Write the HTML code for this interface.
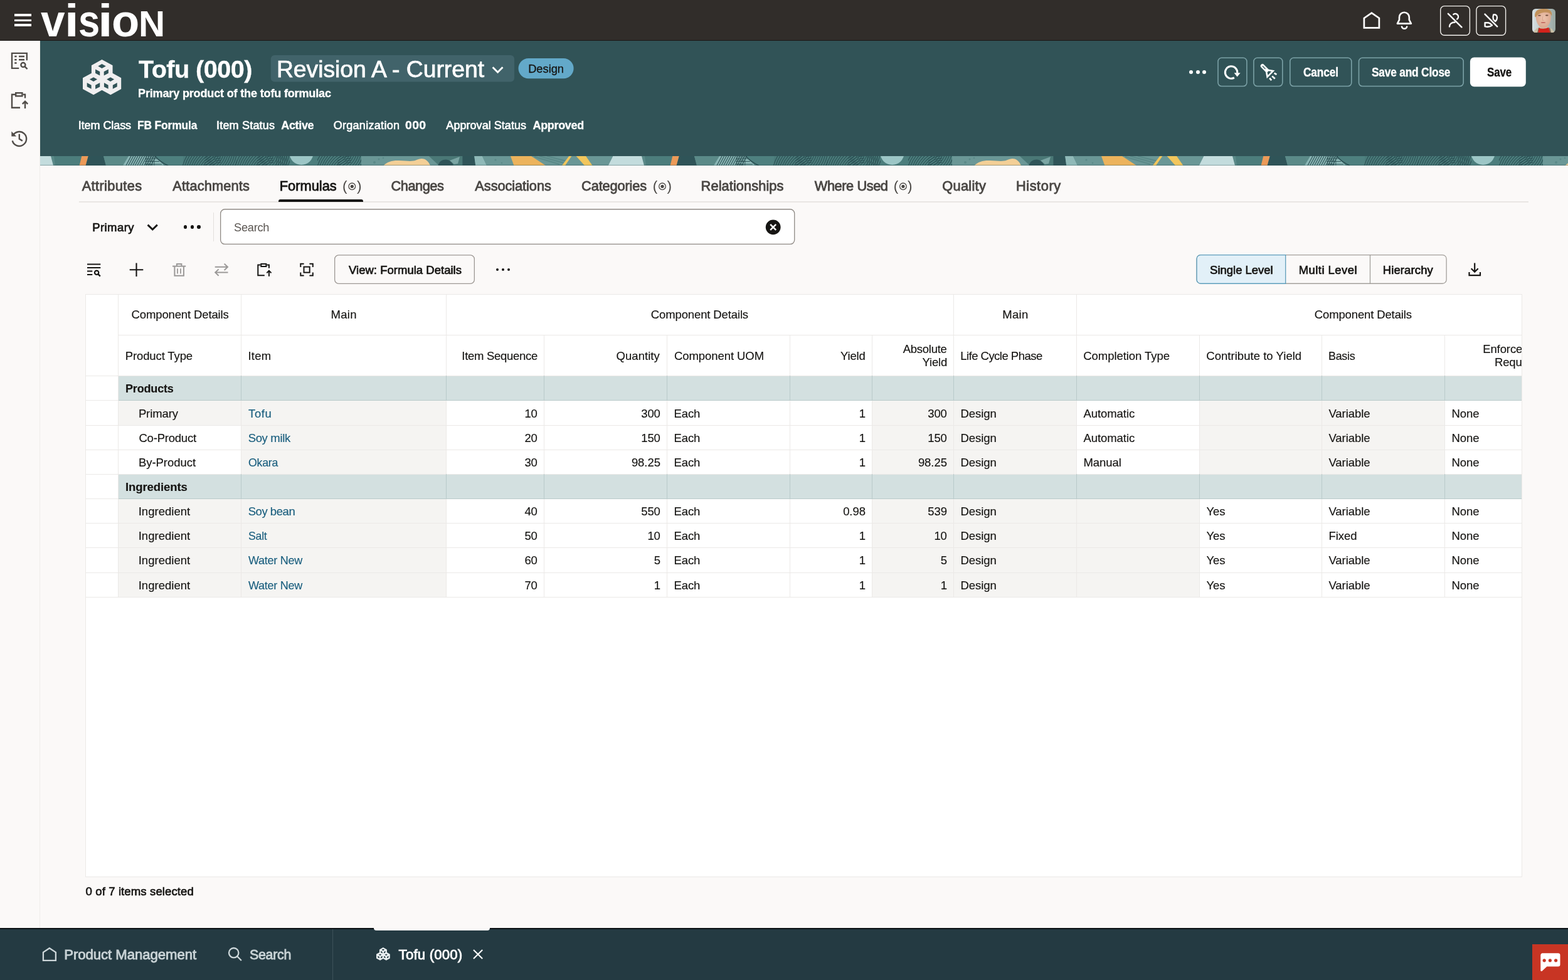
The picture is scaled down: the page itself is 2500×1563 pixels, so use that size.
<!DOCTYPE html>
<html lang="en">
<head>
<meta charset="utf-8">
<title>Tofu (000) - Formulas - Product Management</title>
<meta name="viewport" content="width=2500">
<style>

html,body{margin:0;padding:0}
body{position:relative;width:2500px;height:1563px;overflow:hidden;background:#fbf9f8;color:#161513;font-family:"Liberation Sans", "DejaVu Sans", sans-serif;font-size:18.5px;-webkit-font-smoothing:antialiased}
body>*{position:absolute;display:block;box-sizing:border-box;margin:0;padding:0;will-change:transform}
body>*>*,#logo>*{position:absolute;display:block;box-sizing:border-box;white-space:pre;margin:0;padding:0;transform-origin:0 0}
svg{overflow:visible}
a{text-decoration:none;color:#1b5f7f}
button{font:inherit;color:inherit;background:none;border:0;cursor:pointer}
h1,h2,p{font-weight:400}
.w{color:#fff}
#hero>span,#hero>h1,#hero>p{-webkit-text-stroke:0.3px currentColor}
#grid>span,#grid>a{-webkit-text-stroke:0.16px currentColor}

.b{font-weight:700}
.ln{background:#ebe9e7}
.gl{background:#b9caca}
.g{background:#f5f4f2}
.grp{background:#d3e0e0}
.hb{border:1.8px solid #789fa4;border-radius:6.5px}
.ob{border:1.4px solid #a9a5a1;border-radius:7px}

.cnt{font-size:22.5px;line-height:27px;color:#4a4744}
svg *{vector-effect:none}
.s{fill:none;stroke-linecap:butt;stroke-linejoin:miter}
.r{fill:none;stroke-linecap:round;stroke-linejoin:round}

</style>

</head>
<body>
<header id="topbar" style="left:0;top:0;width:2500px;height:64px;background:#312d2a">
<div style="left:23px;top:22.3px;width:27.3px;height:3.9px;background:#fff"></div>
<div style="left:23px;top:30.6px;width:27.3px;height:3.9px;background:#fff"></div>
<div style="left:23px;top:38.4px;width:27.3px;height:3.9px;background:#fff"></div>
<div id="logo" style="left:0;top:0;width:270px;height:64px" role="img" aria-label="vision"><span style="left:65.33px;top:-8px;font-size:73px;line-height:81px;font-weight:700;transform:scaleX(0.9499);color:#fff;">v</span><span style="left:103.41px;top:-8px;font-size:73px;line-height:81px;font-weight:700;transform:scaleX(1.1165);color:#fff;">i</span><span style="left:124.64px;top:-8px;font-size:73px;line-height:81px;font-weight:700;transform:scaleX(0.8417);color:#fff;">s</span><span style="left:156.35px;top:-8px;font-size:73px;line-height:81px;font-weight:700;transform:scaleX(1.1664);color:#fff;">i</span><span style="left:177.77px;top:-8px;font-size:73px;line-height:81px;font-weight:700;transform:scaleX(0.9925);color:#fff;">o</span><span style="left:221.3px;top:7px;font-size:56.5px;line-height:63px;font-weight:700;transform:scaleX(1.0323);color:#fff;">N</span></div>
<svg style="left:0;top:0" width="2500" height="64" viewBox="0 0 2500 64" aria-hidden="true"><path class="s" stroke="#fff" stroke-width="2.7" d="M2186.9 20.7 L2198.9 29 V44.3 H2174.9 V29 Z"/><path class="r" stroke="#fff" stroke-width="2.6" d="M2227.9 37.6 L2231 31.6 V27.6 a7.9 7.9 0 0 1 15.8 0 V31.6 L2249.9 37.6 Z"/><path class="s" stroke="#fff" stroke-width="2.5" d="M2234.9 41.6 a4.2 4.2 0 0 0 8.4 0"/><rect x="2296.7" y="9.6" width="46.7" height="46.7" rx="6.2" fill="none" stroke="#f1efec" stroke-width="1.4"/><rect x="2353.8999999999996" y="9.6" width="46.7" height="46.7" rx="6.2" fill="none" stroke="#f1efec" stroke-width="1.4"/><g class="r" stroke="#fff" stroke-width="2.4"><path d="M2308.9 21.8 L2330.5 43.3"/><path d="M2317.4 22.9 A4.5 4.5 0 1 1 2323.2 30.4"/><path d="M2311 42.4 C2311 38.2 2314.6 35.4 2319.6 35.5"/></g><g class="r" stroke="#fff" stroke-width="2.4"><path d="M2367.5 22.6 L2387.2 42.3"/><path d="M2381.2 23.4 C2384.6 22.6 2387.2 24.8 2387 28.2 C2386.9 30.6 2385.6 32.8 2384.2 34.2 L2381 31 C2380.2 28.8 2380.4 25.6 2381.2 23.4 Z"/><path d="M2367.6 36.2 H2372.6 C2374.6 36.6 2376.2 37.6 2377.4 38.8 L2379 40.4 C2376 42.6 2371.6 43.2 2367.6 42.2 Z"/></g></svg>
<svg style="left:2442.6px;top:13.9px;border-radius:5.5px;overflow:hidden" width="37.2" height="38" viewBox="0 0 37 38" preserveAspectRatio="none" role="img" aria-label="User"><defs><linearGradient id="avbg" x1="0" x2="1" y1="0" y2="0"><stop offset="0" stop-color="#d9e1e3"/><stop offset="0.45" stop-color="#b9c5c7"/><stop offset="1" stop-color="#99a7a1"/></linearGradient><radialGradient id="avf" cx="0.5" cy="0.45" r="0.6"><stop offset="0" stop-color="#edc4ad"/><stop offset="1" stop-color="#d9a58c"/></radialGradient></defs><rect width="37" height="38" fill="url(#avbg)"/><path fill="#c9bfa6" d="M1 38 L6.5 31.5 L12 29 L25 29 L30.5 31.5 L36 38 Z"/><path fill="#7a6a58" d="M8 38 L10 30.5 L11.5 30.5 L10.5 38 Z M28 38 L26.5 30.5 L28 30.5 L30 38 Z"/><path fill="#d3221b" d="M9.6 38 L10.4 30.4 Q17.6 33.6 26 29.8 L28.4 38 Z"/><path fill="url(#avf)" d="M5.6 13 C5 4 11 2 17.6 2 C24.6 2 30 4.5 29.6 13 C29.4 19 28 24 24.4 27.4 C22 29.8 20 30.6 17.6 30.6 C15.2 30.6 13 29.6 10.8 27.2 C7.4 23.6 6 18.6 5.6 13 Z"/><path fill="#c2915a" d="M4.2 12.6 C3 3.4 9.6 0 17.8 0 C26.6 0 32.4 3 31 11.8 C29.6 8.2 27 6.2 23 5.8 C16.6 5.2 9.6 7 5.4 13.4 Z"/><ellipse cx="11.4" cy="10.7" rx="2.3" ry="0.9" fill="#6e4b3c"/><ellipse cx="23.2" cy="10.5" rx="2.3" ry="0.9" fill="#6e4b3c"/><path d="M16.8 12 L16 18.4 H18.6" fill="none" stroke="#d39a84" stroke-width="0.8"/><ellipse cx="17.4" cy="22" rx="3.7" ry="1.05" fill="#c56f64"/></svg>
</header>
<nav id="rail" aria-label="Item tools" style="left:0;top:64px;width:64px;height:1416px;background:#fbf9f8;border-right:1px solid #efedea">
<svg style="left:0;top:0" width="64" height="200" viewBox="0 64 64 200" aria-hidden="true"><g class="s" stroke="#514d49" stroke-width="2.4"><path d="M30.2 108.9 H19 V84.9 H42.8 V96.2"/><path d="M23.2 90 H26.6 M30 90 H39 M23.2 95.3 H26.6 M30 95.3 H39 M23.2 100.5 H26.6"/><circle cx="36.9" cy="103.5" r="3.5"/><path d="M39.5 106.1 L43.6 110.2"/></g><g class="s" stroke="#514d49" stroke-width="2.4"><path d="M32 171.8 H19 V150.7 H24"/><path d="M36.6 150.7 H40 V156.4"/><rect x="25.2" y="148.2" width="10.2" height="5"/><path d="M40 172.9 V162.4 M35.8 165.9 L40 161.6 L44.2 165.9"/></g><g class="s" stroke="#514d49" stroke-width="2.4"><path d="M20.6 216.2 A11.4 11.4 0 1 1 19.7 224.4"/><path d="M30.8 213.8 V221.6 L35.8 224.6"/></g><path fill="#514d49" d="M18.3 209.6 L18.3 217.6 L26.2 217.6 Z"/></svg>
</nav>
<section id="hero" style="left:64px;top:64px;width:2436px;height:185px;background:#315357;color:#fff">
<svg style="left:0;top:0" width="2436" height="185" viewBox="64 64 2436 185" aria-hidden="true"><rect x="431.8" y="88" width="388.2" height="42.6" rx="6" fill="#41636a"/><rect x="826.5" y="93" width="88.1" height="32.2" rx="16.1" fill="#63a9c9"/><rect x="1942" y="92.3" width="45.9" height="45.2" rx="5.7" fill="none" stroke="#7ba1a6" stroke-width="1.6"/><rect x="1998.9" y="92.3" width="45.9" height="45.2" rx="5.7" fill="none" stroke="#7ba1a6" stroke-width="1.6"/><rect x="2056.8" y="92.3" width="98" height="45.2" rx="5.7" fill="none" stroke="#7ba1a6" stroke-width="1.6"/><rect x="2166.5" y="92.3" width="166.7" height="45.2" rx="5.7" fill="none" stroke="#7ba1a6" stroke-width="1.6"/><rect x="2343.9" y="91.4" width="88.9" height="46.8" rx="6.5" fill="#fff"/></svg>
<h1 style="left:156.96px;top:24px;font-size:39.6px;line-height:44px;letter-spacing:-0.52px;font-weight:700;">Tofu (000)</h1>
<span style="left:376.94px;top:25px;font-size:37.3px;line-height:42px;letter-spacing:-0.03px;-webkit-text-stroke:0.75px currentColor;">Revision A - Current</span>
<span style="left:778.2px;top:35px;font-size:18.3px;line-height:21px;letter-spacing:-0.02px;color:#161513;">Design</span>
<p style="left:155.79px;top:74px;font-size:18.6px;line-height:21px;letter-spacing:-0.19px;font-weight:700;transform:scaleX(0.9725);">Primary product of the tofu formulac</p>
<span style="left:60.74px;top:126px;font-size:18px;line-height:20px;letter-spacing:-0.07px;-webkit-text-stroke:0.6px currentColor;">Item Class</span>
<span style="left:154.53px;top:126px;font-size:18px;line-height:20px;letter-spacing:-0.18px;font-weight:700;-webkit-text-stroke:0.3px currentColor;transform:scaleX(0.9691);">FB Formula</span>
<span style="left:281.04px;top:126px;font-size:18px;line-height:20px;letter-spacing:0.19px;-webkit-text-stroke:0.6px currentColor;">Item Status</span>
<span style="left:384.25px;top:126px;font-size:18px;line-height:20px;letter-spacing:-0.33px;font-weight:700;-webkit-text-stroke:0.3px currentColor;">Active</span>
<span style="left:467.65px;top:126px;font-size:18px;line-height:20px;letter-spacing:0.3px;-webkit-text-stroke:0.6px currentColor;">Organization</span>
<span style="left:582.43px;top:126px;font-size:18px;line-height:20px;letter-spacing:0.36px;font-weight:700;-webkit-text-stroke:0.3px currentColor;transform:scaleX(1.0779);">000</span>
<span style="left:647.36px;top:126px;font-size:18px;line-height:20px;letter-spacing:0.04px;-webkit-text-stroke:0.6px currentColor;">Approval Status</span>
<span style="left:785.55px;top:126px;font-size:18px;line-height:20px;letter-spacing:-0.34px;font-weight:700;-webkit-text-stroke:0.3px currentColor;">Approved</span>
<div style="left:1832.4px;top:47.8px;width:6px;height:6px;background:#fff;border-radius:50%"></div>
<div style="left:1842.6px;top:47.8px;width:6px;height:6px;background:#fff;border-radius:50%"></div>
<div style="left:1852.9px;top:47.8px;width:6px;height:6px;background:#fff;border-radius:50%"></div>
<button style="left:1877.2px;top:27.5px;width:47.5px;height:46.8px;" aria-label="Refresh"></button>
<button style="left:1934.1px;top:27.5px;width:47.5px;height:46.8px;" aria-label="Highlight"></button>
<button style="left:1992px;top:27.5px;width:99.6px;height:46.8px;"></button>
<button style="left:2101.7px;top:27.5px;width:168.3px;height:46.8px;"></button>
<button style="left:2279.9px;top:27.4px;width:88.9px;height:46.8px;"></button>
<span style="left:2013.99px;top:40px;font-size:19.5px;line-height:22px;letter-spacing:-0.2px;font-weight:700;transform:scaleX(0.8898);">Cancel</span>
<span style="left:2123.2px;top:40px;font-size:19.5px;line-height:22px;letter-spacing:-0.2px;font-weight:700;transform:scaleX(0.8861);">Save and Close</span>
<span style="left:2307.41px;top:40px;font-size:19.5px;line-height:22px;letter-spacing:-0.2px;font-weight:700;transform:scaleX(0.8712);color:#161513;">Save</span>
<svg style="left:68.2px;top:30.9px" width="61.2" height="56.3" viewBox="245 200 1235 1135" preserveAspectRatio="none" aria-hidden="true"><path fill="#f0eff0" fill-rule="evenodd" d="M860 200 L1205 385 L1205 640 L1480 790 L1480 1150 L1140 1335 L860 1185 L590 1335 L245 1150 L245 790 L525 640 L525 385 Z M860 340 L990 410 L860 480 L735 410 Z M650 515 L795 590 L795 715 L650 640 Z M1070 515 L925 590 L925 715 L1070 640 Z M590 770 L710 835 L590 905 L465 835 Z M380 945 L520 1020 L520 1145 L380 1070 Z M795 945 L650 1020 L650 1150 L795 1075 Z M1135 770 L1255 835 L1135 905 L1015 835 Z M930 945 L1065 1020 L1065 1145 L930 1075 Z M1350 945 L1210 1020 L1210 1145 L1350 1070 Z"/></svg>
<svg style="left:0;top:0" width="2436" height="185" viewBox="64 64 2436 185" aria-hidden="true"><path class="s" stroke="#fff" stroke-width="2.9" d="M785.6 107.3 L793.55 115.2 L801.5 107.3"/><path class="s" stroke="#fff" stroke-width="3" d="M1967.9 123.9 A9.7 9.7 0 1 1 1972.7 116.5"/><path fill="#fff" d="M1967.6 116.2 H1977.6 L1972.6 122.6 Z"/><path class="r" stroke="#fff" stroke-width="6.3" d="M2012.9 105.2 L2019.6 111.9"/><path class="r" stroke="#315357" stroke-width="1.3" d="M2013.3 105.8 L2017.6 110.1"/><path class="s" stroke="#fff" stroke-width="2.6" stroke-linejoin="round" d="M2018.6 111.3 L2029.8 113.2 L2020.6 122.6 Z"/><path class="s" stroke="#fff" stroke-width="2.7" d="M2031.6 116.6 L2035.4 118.9 M2028.2 121.6 L2032.8 125.6 M2024.2 124.6 L2027.2 128.2"/></svg>
</section>
<div id="strip" style="left:64px;top:249px;width:2436px;height:15px;background:#5b8b8a;overflow:hidden">
<svg style="left:0;top:0" width="2436" height="15" viewBox="0 0 2436 15" aria-hidden="true"><defs><g id="tile"><polygon fill="#5a8988" points="0,0 946,0 946,15 0,15"/><polygon fill="#4c7d7c" points="22,0 66,0 63,15 24,15"/><polygon fill="#2f5458" points="76.6,0 101,0 105,15 72.5,15"/><polygon fill="#5b8a88" points="101,0 141,0 132,15 105,15"/><polygon fill="#8ab6b5" points="141,0 183,0 198,15 132,15"/><polygon fill="#4e807f" points="183,0 228,0 228,15 198,15"/><polygon fill="#4a7b7a" points="228,0 398,0 398,15 228,15"/><polygon fill="#4c7e7d" points="398,0 512,0 512,15 398,15"/><polygon fill="#6a9796" points="512,0 620,0 636,15 512,15"/><polygon fill="#4a7876" points="620,0 673.3,0 673.3,15 636,15"/><polygon fill="#2f5458" points="673.3,0 692.2,0 694.2,15 673.3,15"/><polygon fill="#8fb9b8" points="692.2,0 705,0 712,15 694.2,15"/><polygon fill="#6a9796" points="705,0 913,0 906,15 712,15"/><polygon fill="#ec9a58" points="66.3,0 76.6,0 72.5,15 62.6,15"/><path d="M145 0 L137 15 M148.6 0 L140.6 15 M152.2 0 L144.2 15 M155.8 0 L147.8 15 M159.4 0 L151.4 15 M163 0 L155 15 M166.6 0 L158.6 15 M170.2 0 L162.2 15 M173.8 0 L165.8 15 M177.4 0 L169.4 15 M181 0 L173 15 M184.6 0 L176.6 15 " stroke="#2b5054" stroke-width="1.1" fill="none"/><path d="M169 0 V15 M172.2 0 V15 M175.4 0 V15 M178.6 0 V15 M181.8 0 V15 M167 4 H186 M167 8.5 H190 M167 13 H194" stroke="#2b5054" stroke-width="0.9" fill="none"/><path d="M183 0 Q192 10 204 15" stroke="#2b5054" stroke-width="1.6" fill="none"/><clipPath id="k1"><rect x="226" y="0" width="62" height="15"/></clipPath><g clip-path="url(#k1)" fill="none" stroke="#2b5054" stroke-width="1.05"><circle cx="288" cy="32" r="22"/><circle cx="288" cy="32" r="25.4"/><circle cx="288" cy="32" r="28.8"/><circle cx="288" cy="32" r="32.2"/><circle cx="288" cy="32" r="35.6"/><circle cx="288" cy="32" r="39"/><circle cx="288" cy="32" r="42.4"/><circle cx="288" cy="32" r="45.8"/><circle cx="288" cy="32" r="49.2"/><circle cx="288" cy="32" r="52.6"/><circle cx="288" cy="32" r="56"/><circle cx="288" cy="32" r="59.4"/><circle cx="288" cy="32" r="62.8"/></g><clipPath id="k2"><rect x="262" y="0" width="52" height="15"/></clipPath><g clip-path="url(#k2)" fill="none" stroke="#2b5054" stroke-width="1.05"><circle cx="254" cy="-14" r="16"/><circle cx="254" cy="-14" r="19.4"/><circle cx="254" cy="-14" r="22.8"/><circle cx="254" cy="-14" r="26.2"/><circle cx="254" cy="-14" r="29.6"/><circle cx="254" cy="-14" r="33"/><circle cx="254" cy="-14" r="36.4"/><circle cx="254" cy="-14" r="39.8"/><circle cx="254" cy="-14" r="43.2"/><circle cx="254" cy="-14" r="46.6"/><circle cx="254" cy="-14" r="50"/><circle cx="254" cy="-14" r="53.4"/><circle cx="254" cy="-14" r="56.8"/><circle cx="254" cy="-14" r="60.2"/><circle cx="254" cy="-14" r="63.6"/></g><clipPath id="k3"><rect x="308" y="0" width="64" height="15"/></clipPath><g clip-path="url(#k3)" fill="none" stroke="#2b5054" stroke-width="1.05"><circle cx="372" cy="32" r="22"/><circle cx="372" cy="32" r="25.4"/><circle cx="372" cy="32" r="28.8"/><circle cx="372" cy="32" r="32.2"/><circle cx="372" cy="32" r="35.6"/><circle cx="372" cy="32" r="39"/><circle cx="372" cy="32" r="42.4"/><circle cx="372" cy="32" r="45.8"/><circle cx="372" cy="32" r="49.2"/><circle cx="372" cy="32" r="52.6"/><circle cx="372" cy="32" r="56"/><circle cx="372" cy="32" r="59.4"/><circle cx="372" cy="32" r="62.8"/></g><clipPath id="k4"><rect x="346" y="0" width="52" height="15"/></clipPath><g clip-path="url(#k4)" fill="none" stroke="#2b5054" stroke-width="1.05"><circle cx="338" cy="-14" r="16"/><circle cx="338" cy="-14" r="19.4"/><circle cx="338" cy="-14" r="22.8"/><circle cx="338" cy="-14" r="26.2"/><circle cx="338" cy="-14" r="29.6"/><circle cx="338" cy="-14" r="33"/><circle cx="338" cy="-14" r="36.4"/><circle cx="338" cy="-14" r="39.8"/><circle cx="338" cy="-14" r="43.2"/><circle cx="338" cy="-14" r="46.6"/><circle cx="338" cy="-14" r="50"/><circle cx="338" cy="-14" r="53.4"/><circle cx="338" cy="-14" r="56.8"/><circle cx="338" cy="-14" r="60.2"/><circle cx="338" cy="-14" r="63.6"/></g><clipPath id="k5"><rect x="442" y="0" width="54" height="15"/></clipPath><g clip-path="url(#k5)" fill="none" stroke="#2b5054" stroke-width="1.05"><circle cx="496" cy="32" r="22"/><circle cx="496" cy="32" r="25.4"/><circle cx="496" cy="32" r="28.8"/><circle cx="496" cy="32" r="32.2"/><circle cx="496" cy="32" r="35.6"/><circle cx="496" cy="32" r="39"/><circle cx="496" cy="32" r="42.4"/><circle cx="496" cy="32" r="45.8"/><circle cx="496" cy="32" r="49.2"/><circle cx="496" cy="32" r="52.6"/><circle cx="496" cy="32" r="56"/><circle cx="496" cy="32" r="59.4"/></g><clipPath id="k6"><rect x="474" y="0" width="38" height="15"/></clipPath><g clip-path="url(#k6)" fill="none" stroke="#2b5054" stroke-width="1.05"><circle cx="466" cy="-14" r="16"/><circle cx="466" cy="-14" r="19.4"/><circle cx="466" cy="-14" r="22.8"/><circle cx="466" cy="-14" r="26.2"/><circle cx="466" cy="-14" r="29.6"/><circle cx="466" cy="-14" r="33"/><circle cx="466" cy="-14" r="36.4"/><circle cx="466" cy="-14" r="39.8"/><circle cx="466" cy="-14" r="43.2"/><circle cx="466" cy="-14" r="46.6"/><circle cx="466" cy="-14" r="50"/><circle cx="466" cy="-14" r="53.4"/><circle cx="466" cy="-14" r="56.8"/></g><path d="M377 0 V15 M380.2 0 V15 M383.4 0 V15 M386.6 0 V15 M389.8 0 V15 M393 0 V15 " stroke="#2b5054" stroke-width="0.9" fill="none"/><circle cx="416.5" cy="-5" r="19" fill="#9cc6c6"/><g fill="#5a8988"><circle cx="533" cy="10" r="2"/><circle cx="540" cy="5" r="1.4"/><circle cx="547" cy="3" r="1.2"/><circle cx="726" cy="6" r="1.6"/><circle cx="736" cy="11" r="1.3"/></g><path fill="#f3cf96" d="M547.7 15 C553 9 562 6.6 572 7 C584 7.6 593 9 599 6.6 C604 4.4 608 3.2 612 4.6 C617 6.4 620 10.5 622 15 Z"/><path fill="#2f5458" d="M634.5 15 C636 8 642 5.2 647 5.4 C652 5.6 657 9 659 15 Z"/><path fill="#7aa5a3" d="M653 7 L669 1 L666 12 L660 13 Z"/><polygon fill="#ecb35c" points="750,0 783,0 806,15 755.4,15"/><path d="M788 1 L828 13 M796 0 L835 11 M808 0 L839 8" stroke="#5a8988" stroke-width="2" fill="none"/><polygon fill="#f2c65c" points="843.2,0 847.4,0 837,15 831.9,15"/><polygon fill="#f2c65c" points="854.6,0 870.1,0 880.5,15 868,15"/><polygon fill="#c3dcdd" points="913.5,0 959,0 963,15 906,15"/><polygon fill="#c3dcdd" points="-28.5,0 17,0 21,15 -36,15"/></g></defs><use href="#tile"/><use href="#tile" x="942"/><use href="#tile" x="1884"/><rect x="0" y="14.3" width="2436" height="0.7" fill="#24474b" opacity="0.55"/></svg>
</div>
<main id="main" style="left:64px;top:264px;width:2436px;height:1216px">
<svg style="left:0;top:0" width="2436" height="300" viewBox="64 264 2436 300" aria-hidden="true"><rect x="351.65" y="333.75" width="915.1" height="55.7" rx="6.85" fill="#fff" stroke="#8f8a85" stroke-width="1.3"/><rect x="533.65" y="406.85" width="222.7" height="45.5" rx="6.35" fill="none" stroke="#9d9894" stroke-width="1.3"/><rect x="1908.05" y="406.55" width="398.1" height="45.7" rx="6.35" fill="none" stroke="#a39f9b" stroke-width="1.3"/><path d="M2049.7 406.55 H1914.4 a6.35 6.35 0 0 0 -6.35 6.35 V445.9 a6.35 6.35 0 0 0 6.35 6.35 H2049.7 Z" fill="#e2f0f8" stroke="#5d9dbb" stroke-width="1.3"/><path d="M2184.5 406.6 V452.3" stroke="#a39f9b" stroke-width="1.3" fill="none"/></svg>
<div style="left:62px;top:57.2px;width:2311px;height:1.5px;background:#e9e6e3"></div>
<span style="left:66.66px;top:20px;font-size:21.8px;line-height:25px;letter-spacing:0.37px;-webkit-text-stroke:0.83px currentColor;color:#4a4744;">Attributes</span>
<span style="left:211.36px;top:20px;font-size:21.8px;line-height:25px;letter-spacing:0.13px;-webkit-text-stroke:0.83px currentColor;color:#4a4744;">Attachments</span>
<span style="left:381.71px;top:20px;font-size:21.8px;line-height:25px;letter-spacing:0.02px;-webkit-text-stroke:0.83px currentColor;color:#161513;">Formulas</span>
<span style="left:559.59px;top:20px;font-size:21.8px;line-height:25px;letter-spacing:-0.5px;-webkit-text-stroke:0.83px currentColor;color:#4a4744;">Changes</span>
<span style="left:693.36px;top:20px;font-size:21.8px;line-height:25px;letter-spacing:-0.08px;-webkit-text-stroke:0.83px currentColor;color:#4a4744;">Associations</span>
<span style="left:863.09px;top:20px;font-size:21.8px;line-height:25px;letter-spacing:-0.15px;-webkit-text-stroke:0.83px currentColor;color:#4a4744;">Categories</span>
<span style="left:1053.61px;top:20px;font-size:21.8px;line-height:25px;letter-spacing:0.08px;-webkit-text-stroke:0.83px currentColor;color:#4a4744;">Relationships</span>
<span style="left:1234.8px;top:20px;font-size:21.8px;line-height:25px;letter-spacing:-0.44px;-webkit-text-stroke:0.83px currentColor;color:#4a4744;">Where Used</span>
<span style="left:1438.27px;top:20px;font-size:21.8px;line-height:25px;letter-spacing:0.29px;-webkit-text-stroke:0.83px currentColor;color:#4a4744;">Quality</span>
<span style="left:1555.91px;top:20px;font-size:21.8px;line-height:25px;letter-spacing:0.57px;-webkit-text-stroke:0.83px currentColor;color:#4a4744;">History</span>
<div style="left:379.5px;top:54.4px;width:135px;height:3.8px;background:#161513;border-radius:3px 3px 0 0"></div>
<span style="left:83.18px;top:88px;font-size:18.5px;line-height:21px;letter-spacing:0.44px;-webkit-text-stroke:0.7px currentColor;">Primary</span>
<div style="left:275.8px;top:74.5px;width:1.2px;height:46.5px;background:#e3e0dc"></div>
<span style="left:309.07px;top:88px;font-size:18.8px;line-height:21px;letter-spacing:-0.28px;transform:scaleX(0.9727);color:#5b5652;">Search</span>
<div style="left:228.6px;top:95.3px;width:5.4px;height:5.4px;background:#161513;border-radius:50%"></div>
<div style="left:239.5px;top:95.3px;width:5.4px;height:5.4px;background:#161513;border-radius:50%"></div>
<div style="left:250.3px;top:95.3px;width:5.4px;height:5.4px;background:#161513;border-radius:50%"></div>
<button style="left:469px;top:142.2px;width:224px;height:46.8px;"></button>
<span style="left:492.02px;top:156px;font-size:18.5px;line-height:21px;letter-spacing:0.02px;-webkit-text-stroke:0.7px currentColor;">View: Formula Details</span>
<div style="left:727px;top:164.1px;width:4.4px;height:4.4px;background:#161513;border-radius:50%"></div>
<div style="left:735.8px;top:164.1px;width:4.4px;height:4.4px;background:#161513;border-radius:50%"></div>
<div style="left:744.6px;top:164.1px;width:4.4px;height:4.4px;background:#161513;border-radius:50%"></div>
<span style="left:1865.06px;top:156px;font-size:18.5px;line-height:21px;letter-spacing:-0.01px;-webkit-text-stroke:0.7px currentColor;">Single Level</span>
<span style="left:2006.68px;top:156px;font-size:18.5px;line-height:21px;letter-spacing:0.44px;-webkit-text-stroke:0.7px currentColor;">Multi Level</span>
<span style="left:2140.68px;top:156px;font-size:18.5px;line-height:21px;letter-spacing:0.12px;-webkit-text-stroke:0.7px currentColor;">Hierarchy</span>
<span style="left:72.57px;top:1147px;font-size:18.6px;line-height:21px;letter-spacing:0.09px;-webkit-text-stroke:0.71px currentColor;">0 of 7 items selected</span>
<svg style="left:0;top:0" width="2436" height="300" viewBox="64 264 2436 300" aria-hidden="true"><path class="s" stroke="#161513" stroke-width="2.9" d="M235.6 358.6 L243.2 366 L250.8 358.6"/><circle cx="1232.7" cy="362.3" r="11.9" fill="#161513"/><path class="s" stroke="#fff" stroke-width="2.5" d="M1228.2 357.8 L1237.2 366.8 M1237.2 357.8 L1228.2 366.8"/><circle cx="561.3" cy="297.3" r="5.3" fill="none" stroke="#4a4744" stroke-width="1.3"/><circle cx="561.3" cy="297.3" r="2.6" fill="#4a4744"/><circle cx="1056" cy="297.3" r="5.3" fill="none" stroke="#4a4744" stroke-width="1.3"/><circle cx="1056" cy="297.3" r="2.6" fill="#4a4744"/><circle cx="1439.9" cy="297.3" r="5.3" fill="none" stroke="#4a4744" stroke-width="1.3"/><circle cx="1439.9" cy="297.3" r="2.6" fill="#4a4744"/><g class="s" stroke="#161513" stroke-width="2"><path d="M139 421.5 H160.3 M139 427 H160.3 M139 432.5 H147.3 M139 437.9 H147.3"/><circle cx="154.1" cy="434.8" r="3.2" stroke-width="2.2"/><path d="M156.4 437.2 L159.8 440.6" stroke-width="2.4"/></g><path class="s" stroke="#161513" stroke-width="2.1" d="M206.7 430.3 H228.3 M217.5 419.4 V441.1"/><g class="s" stroke="#9b9998" stroke-width="2"><path d="M275 424.6 H296.2"/><path d="M281.9 424.6 V420.9 H289.4 V424.6"/><path d="M278.4 424.6 V439.7 H292.9 V424.6"/><path d="M283 428.2 V436.4 M288 428.2 V436.4" stroke-width="1.8"/></g><g class="s" stroke="#9b9998" stroke-width="2"><path d="M342.7 425.8 H362.6 M357.6 420.6 L363 425.8 L357.6 431"/><path d="M363.5 434.6 H343.6 M348.6 429.4 L343.2 434.6 L348.6 439.8"/></g><g class="s" stroke="#161513" stroke-width="2"><path d="M421.8 439.2 H411.3 V422.4 H415.3"/><path d="M425.4 422.4 H428.9 V427.8"/><rect x="416.3" y="420.9" width="8.1" height="4.1"/><path d="M428.9 440.7 V432 M425.3 435.4 L428.9 431.6 L432.5 435.4"/></g><g class="s" stroke="#161513" stroke-width="2"><path d="M479.3 426 V420.8 H484.6 M493.4 420.8 H498.8 V426 M498.8 434.4 V439.6 H493.4 M484.6 439.6 H479.3 V434.4"/><rect x="484.5" y="425.6" width="9.2" height="9"/></g><g class="s" stroke="#161513" stroke-width="2.2"><path d="M2342.5 433.9 V439.1 H2360 V433.9"/><path d="M2351.2 419.5 V433.4 M2345.7 428.2 L2351.2 433.8 L2356.7 428.2"/></g></svg>
<span style="left:482.1px;top:20px;font-size:22.5px;line-height:25px;color:#4a4744;">(</span>
<span style="left:504.9px;top:20px;font-size:22.5px;line-height:25px;color:#4a4744;">)</span>
<span style="left:976.8px;top:20px;font-size:22.5px;line-height:25px;color:#4a4744;">(</span>
<span style="left:999.4px;top:20px;font-size:22.5px;line-height:25px;color:#4a4744;">)</span>
<span style="left:1360.7px;top:20px;font-size:22.5px;line-height:25px;color:#4a4744;">(</span>
<span style="left:1383.1px;top:20px;font-size:22.5px;line-height:25px;color:#4a4744;">)</span>
</main>
<div id="grid" role="grid" style="left:136px;top:469px;width:2291px;height:930px;background:#fff;border:1px solid #ebe9e7;overflow:hidden">
<div class="grp" style="left:52px;top:129px;width:2312px;height:40px;"></div>
<div class="g" style="left:52px;top:169px;width:195px;height:39px;"></div>
<div class="g" style="left:248px;top:169px;width:326px;height:39px;"></div>
<div class="g" style="left:1254px;top:169px;width:129px;height:39px;"></div>
<div class="g" style="left:1384px;top:169px;width:195px;height:39px;"></div>
<div class="g" style="left:1776px;top:169px;width:194px;height:39px;"></div>
<div class="g" style="left:1971px;top:169px;width:195px;height:39px;"></div>
<div class="g" style="left:248px;top:209px;width:326px;height:38px;"></div>
<div class="g" style="left:1254px;top:209px;width:129px;height:38px;"></div>
<div class="g" style="left:1384px;top:209px;width:195px;height:38px;"></div>
<div class="g" style="left:1776px;top:209px;width:194px;height:38px;"></div>
<div class="g" style="left:1971px;top:209px;width:195px;height:38px;"></div>
<div class="g" style="left:248px;top:248px;width:326px;height:38px;"></div>
<div class="g" style="left:1254px;top:248px;width:129px;height:38px;"></div>
<div class="g" style="left:1384px;top:248px;width:195px;height:38px;"></div>
<div class="g" style="left:1776px;top:248px;width:194px;height:38px;"></div>
<div class="g" style="left:1971px;top:248px;width:195px;height:38px;"></div>
<div class="grp" style="left:52px;top:286px;width:2312px;height:40px;"></div>
<div class="g" style="left:52px;top:326px;width:195px;height:38px;"></div>
<div class="g" style="left:248px;top:326px;width:326px;height:38px;"></div>
<div class="g" style="left:1254px;top:326px;width:129px;height:38px;"></div>
<div class="g" style="left:1384px;top:326px;width:195px;height:38px;"></div>
<div class="g" style="left:1580px;top:326px;width:195px;height:38px;"></div>
<div class="g" style="left:52px;top:365px;width:195px;height:38px;"></div>
<div class="g" style="left:248px;top:365px;width:326px;height:38px;"></div>
<div class="g" style="left:1254px;top:365px;width:129px;height:38px;"></div>
<div class="g" style="left:1384px;top:365px;width:195px;height:38px;"></div>
<div class="g" style="left:1580px;top:365px;width:195px;height:38px;"></div>
<div class="g" style="left:52px;top:404px;width:195px;height:39px;"></div>
<div class="g" style="left:248px;top:404px;width:326px;height:39px;"></div>
<div class="g" style="left:1254px;top:404px;width:129px;height:39px;"></div>
<div class="g" style="left:1384px;top:404px;width:195px;height:39px;"></div>
<div class="g" style="left:1580px;top:404px;width:195px;height:39px;"></div>
<div class="g" style="left:52px;top:444px;width:195px;height:38px;"></div>
<div class="g" style="left:248px;top:444px;width:326px;height:38px;"></div>
<div class="g" style="left:1254px;top:444px;width:129px;height:38px;"></div>
<div class="g" style="left:1384px;top:444px;width:195px;height:38px;"></div>
<div class="g" style="left:1580px;top:444px;width:195px;height:38px;"></div>
<div class="ln" style="left:52px;top:64px;width:2312px;height:1px;"></div>
<div class="ln" style="left:0px;top:129px;width:2364px;height:1px;"></div>
<div class="ln" style="left:0px;top:168px;width:2364px;height:1px;"></div>
<div class="gl" style="left:52px;top:168px;width:2312px;height:1px;"></div>
<div class="ln" style="left:0px;top:208px;width:2364px;height:1px;"></div>
<div class="ln" style="left:0px;top:247px;width:2364px;height:1px;"></div>
<div class="ln" style="left:0px;top:286px;width:2364px;height:1px;"></div>
<div class="ln" style="left:0px;top:325px;width:2364px;height:1px;"></div>
<div class="gl" style="left:52px;top:325px;width:2312px;height:1px;"></div>
<div class="ln" style="left:0px;top:364px;width:2364px;height:1px;"></div>
<div class="ln" style="left:0px;top:403px;width:2364px;height:1px;"></div>
<div class="ln" style="left:0px;top:443px;width:2364px;height:1px;"></div>
<div class="ln" style="left:0px;top:482px;width:2364px;height:1px;"></div>
<div class="ln" style="left:51px;top:0px;width:1px;height:64px;"></div>
<div class="ln" style="left:51px;top:64px;width:1px;height:419px;"></div>
<div class="ln" style="left:247px;top:0px;width:1px;height:64px;"></div>
<div class="ln" style="left:247px;top:64px;width:1px;height:419px;"></div>
<div class="gl" style="left:247px;top:129px;width:1px;height:40px;"></div>
<div class="gl" style="left:247px;top:286px;width:1px;height:40px;"></div>
<div class="ln" style="left:574px;top:0px;width:1px;height:64px;"></div>
<div class="ln" style="left:574px;top:64px;width:1px;height:419px;"></div>
<div class="gl" style="left:574px;top:129px;width:1px;height:40px;"></div>
<div class="gl" style="left:574px;top:286px;width:1px;height:40px;"></div>
<div class="ln" style="left:730px;top:64px;width:1px;height:419px;"></div>
<div class="gl" style="left:730px;top:129px;width:1px;height:40px;"></div>
<div class="gl" style="left:730px;top:286px;width:1px;height:40px;"></div>
<div class="ln" style="left:926px;top:64px;width:1px;height:419px;"></div>
<div class="gl" style="left:926px;top:129px;width:1px;height:40px;"></div>
<div class="gl" style="left:926px;top:286px;width:1px;height:40px;"></div>
<div class="ln" style="left:1122px;top:64px;width:1px;height:419px;"></div>
<div class="gl" style="left:1122px;top:129px;width:1px;height:40px;"></div>
<div class="gl" style="left:1122px;top:286px;width:1px;height:40px;"></div>
<div class="ln" style="left:1253px;top:64px;width:1px;height:419px;"></div>
<div class="gl" style="left:1253px;top:129px;width:1px;height:40px;"></div>
<div class="gl" style="left:1253px;top:286px;width:1px;height:40px;"></div>
<div class="ln" style="left:1383px;top:0px;width:1px;height:64px;"></div>
<div class="ln" style="left:1383px;top:64px;width:1px;height:419px;"></div>
<div class="gl" style="left:1383px;top:129px;width:1px;height:40px;"></div>
<div class="gl" style="left:1383px;top:286px;width:1px;height:40px;"></div>
<div class="ln" style="left:1579px;top:0px;width:1px;height:64px;"></div>
<div class="ln" style="left:1579px;top:64px;width:1px;height:419px;"></div>
<div class="gl" style="left:1579px;top:129px;width:1px;height:40px;"></div>
<div class="gl" style="left:1579px;top:286px;width:1px;height:40px;"></div>
<div class="ln" style="left:1775px;top:64px;width:1px;height:419px;"></div>
<div class="gl" style="left:1775px;top:129px;width:1px;height:40px;"></div>
<div class="gl" style="left:1775px;top:286px;width:1px;height:40px;"></div>
<div class="ln" style="left:1970px;top:64px;width:1px;height:419px;"></div>
<div class="gl" style="left:1970px;top:129px;width:1px;height:40px;"></div>
<div class="gl" style="left:1970px;top:286px;width:1px;height:40px;"></div>
<div class="ln" style="left:2166px;top:64px;width:1px;height:419px;"></div>
<div class="gl" style="left:2166px;top:129px;width:1px;height:40px;"></div>
<div class="gl" style="left:2166px;top:286px;width:1px;height:40px;"></div>
<span style="left:72.56px;top:21px;font-size:18.5px;line-height:21px;letter-spacing:-0.13px;">Component Details</span>
<span style="left:390.48px;top:21px;font-size:18.5px;line-height:21px;letter-spacing:0.3px;">Main</span>
<span style="left:900.86px;top:21px;font-size:18.5px;line-height:21px;letter-spacing:-0.13px;">Component Details</span>
<span style="left:1461.18px;top:21px;font-size:18.5px;line-height:21px;letter-spacing:0.3px;">Main</span>
<span style="left:1958.76px;top:21px;font-size:18.5px;line-height:21px;letter-spacing:-0.13px;">Component Details</span>
<span style="left:62.68px;top:87px;font-size:18.5px;line-height:21px;letter-spacing:-0.11px;">Product Type</span>
<span style="left:258.49px;top:87px;font-size:18.5px;line-height:21px;letter-spacing:0.25px;">Item</span>
<span style="left:599.29px;top:87px;font-size:18.5px;line-height:21px;letter-spacing:-0.29px;">Item Sequence</span>
<span style="left:845.62px;top:87px;font-size:18.5px;line-height:21px;letter-spacing:0.04px;">Quantity</span>
<span style="left:937.96px;top:87px;font-size:18.5px;line-height:21px;letter-spacing:-0.07px;">Component UOM</span>
<span style="left:1203.09px;top:87px;font-size:18.5px;line-height:21px;letter-spacing:-0.19px;">Yield</span>
<span style="left:1302.66px;top:76px;font-size:18.5px;line-height:21px;letter-spacing:-0.25px;">Absolute</span>
<span style="left:1333.59px;top:97px;font-size:18.5px;line-height:21px;letter-spacing:-0.19px;">Yield</span>
<span style="left:1394.18px;top:87px;font-size:18.5px;line-height:21px;letter-spacing:-0.52px;">Life Cycle Phase</span>
<span style="left:1590.26px;top:87px;font-size:18.5px;line-height:21px;letter-spacing:-0.05px;">Completion Type</span>
<span style="left:1786.26px;top:87px;font-size:18.5px;line-height:21px;letter-spacing:0.04px;">Contribute to Yield</span>
<span style="left:1981.44px;top:87px;font-size:18.5px;line-height:21px;letter-spacing:-0.28px;transform:scaleX(0.9653);">Basis</span>
<span style="left:2227.18px;top:76px;font-size:18.5px;line-height:21px;letter-spacing:-0.1px;">Enforce Integer</span>
<span style="left:2245.88px;top:97px;font-size:18.5px;line-height:21px;letter-spacing:-0.1px;">Requirement</span>
<span style="left:62.99px;top:139px;font-size:18.5px;line-height:21px;letter-spacing:-0.18px;font-weight:700;transform:scaleX(0.9740);">Products</span>
<span style="left:83.88px;top:179px;font-size:18.5px;line-height:21px;letter-spacing:-0.1px;">Primary</span>
<a style="left:259.08px;top:179px;font-size:18.5px;line-height:21px;letter-spacing:0.56px;color:#1b5f7f;">Tofu</a>
<span style="left:699.39px;top:179px;font-size:18.5px;line-height:21px;letter-spacing:-0.05px;">10</span>
<span style="left:885.15px;top:179px;font-size:18.5px;line-height:21px;letter-spacing:-0.05px;">300</span>
<span style="left:937.4px;top:179px;font-size:18.5px;line-height:21px;letter-spacing:-0.05px;">Each</span>
<span style="left:1232.81px;top:179px;font-size:18.5px;line-height:21px;letter-spacing:-0.05px;">1</span>
<span style="left:1342.15px;top:179px;font-size:18.5px;line-height:21px;letter-spacing:-0.05px;">300</span>
<span style="left:1394.4px;top:179px;font-size:18.5px;line-height:21px;letter-spacing:-0.05px;">Design</span>
<span style="left:1590.4px;top:179px;font-size:18.5px;line-height:21px;letter-spacing:-0.05px;">Automatic</span>
<span style="left:1981.4px;top:179px;font-size:18.5px;line-height:21px;letter-spacing:-0.05px;">Variable</span>
<span style="left:2177.4px;top:179px;font-size:18.5px;line-height:21px;letter-spacing:-0.05px;">None</span>
<span style="left:84.46px;top:218px;font-size:18.5px;line-height:21px;letter-spacing:-0.21px;">Co-Product</span>
<a style="left:258.66px;top:218px;font-size:18.5px;line-height:21px;letter-spacing:-0.33px;color:#1b5f7f;">Soy milk</a>
<span style="left:699.39px;top:218px;font-size:18.5px;line-height:21px;letter-spacing:-0.05px;">20</span>
<span style="left:885.15px;top:218px;font-size:18.5px;line-height:21px;letter-spacing:-0.05px;">150</span>
<span style="left:937.4px;top:218px;font-size:18.5px;line-height:21px;letter-spacing:-0.05px;">Each</span>
<span style="left:1232.81px;top:218px;font-size:18.5px;line-height:21px;letter-spacing:-0.05px;">1</span>
<span style="left:1342.15px;top:218px;font-size:18.5px;line-height:21px;letter-spacing:-0.05px;">150</span>
<span style="left:1394.4px;top:218px;font-size:18.5px;line-height:21px;letter-spacing:-0.05px;">Design</span>
<span style="left:1590.4px;top:218px;font-size:18.5px;line-height:21px;letter-spacing:-0.05px;">Automatic</span>
<span style="left:1981.4px;top:218px;font-size:18.5px;line-height:21px;letter-spacing:-0.05px;">Variable</span>
<span style="left:2177.4px;top:218px;font-size:18.5px;line-height:21px;letter-spacing:-0.05px;">None</span>
<span style="left:83.88px;top:257px;font-size:18.5px;line-height:21px;letter-spacing:-0.04px;">By-Product</span>
<a style="left:258.66px;top:257px;font-size:18.5px;line-height:21px;letter-spacing:-0.28px;transform:scaleX(0.9607);color:#1b5f7f;">Okara</a>
<span style="left:699.39px;top:257px;font-size:18.5px;line-height:21px;letter-spacing:-0.05px;">30</span>
<span style="left:869.88px;top:257px;font-size:18.5px;line-height:21px;letter-spacing:-0.05px;">98.25</span>
<span style="left:937.4px;top:257px;font-size:18.5px;line-height:21px;letter-spacing:-0.05px;">Each</span>
<span style="left:1232.81px;top:257px;font-size:18.5px;line-height:21px;letter-spacing:-0.05px;">1</span>
<span style="left:1326.88px;top:257px;font-size:18.5px;line-height:21px;letter-spacing:-0.05px;">98.25</span>
<span style="left:1394.4px;top:257px;font-size:18.5px;line-height:21px;letter-spacing:-0.05px;">Design</span>
<span style="left:1590.4px;top:257px;font-size:18.5px;line-height:21px;letter-spacing:-0.05px;">Manual</span>
<span style="left:1981.4px;top:257px;font-size:18.5px;line-height:21px;letter-spacing:-0.05px;">Variable</span>
<span style="left:2177.4px;top:257px;font-size:18.5px;line-height:21px;letter-spacing:-0.05px;">None</span>
<span style="left:62.96px;top:296px;font-size:18.5px;line-height:21px;letter-spacing:-0.09px;font-weight:700;">Ingredients</span>
<span style="left:83.69px;top:335px;font-size:18.5px;line-height:21px;letter-spacing:0.02px;">Ingredient</span>
<a style="left:258.66px;top:335px;font-size:18.5px;line-height:21px;letter-spacing:-0.45px;color:#1b5f7f;">Soy bean</a>
<span style="left:699.39px;top:335px;font-size:18.5px;line-height:21px;letter-spacing:-0.05px;">40</span>
<span style="left:885.15px;top:335px;font-size:18.5px;line-height:21px;letter-spacing:-0.05px;">550</span>
<span style="left:937.4px;top:335px;font-size:18.5px;line-height:21px;letter-spacing:-0.05px;">Each</span>
<span style="left:1207.14px;top:335px;font-size:18.5px;line-height:21px;letter-spacing:-0.05px;">0.98</span>
<span style="left:1342.3px;top:335px;font-size:18.5px;line-height:21px;letter-spacing:-0.05px;">539</span>
<span style="left:1394.4px;top:335px;font-size:18.5px;line-height:21px;letter-spacing:-0.05px;">Design</span>
<span style="left:1786.4px;top:335px;font-size:18.5px;line-height:21px;letter-spacing:-0.05px;">Yes</span>
<span style="left:1981.4px;top:335px;font-size:18.5px;line-height:21px;letter-spacing:-0.05px;">Variable</span>
<span style="left:2177.4px;top:335px;font-size:18.5px;line-height:21px;letter-spacing:-0.05px;">None</span>
<span style="left:83.69px;top:374px;font-size:18.5px;line-height:21px;letter-spacing:0.02px;">Ingredient</span>
<a style="left:258.7px;top:374px;font-size:18.5px;line-height:21px;letter-spacing:-0.28px;transform:scaleX(0.9574);color:#1b5f7f;">Salt</a>
<span style="left:699.39px;top:374px;font-size:18.5px;line-height:21px;letter-spacing:-0.05px;">50</span>
<span style="left:895.39px;top:374px;font-size:18.5px;line-height:21px;letter-spacing:-0.05px;">10</span>
<span style="left:937.4px;top:374px;font-size:18.5px;line-height:21px;letter-spacing:-0.05px;">Each</span>
<span style="left:1232.81px;top:374px;font-size:18.5px;line-height:21px;letter-spacing:-0.05px;">1</span>
<span style="left:1352.39px;top:374px;font-size:18.5px;line-height:21px;letter-spacing:-0.05px;">10</span>
<span style="left:1394.4px;top:374px;font-size:18.5px;line-height:21px;letter-spacing:-0.05px;">Design</span>
<span style="left:1786.4px;top:374px;font-size:18.5px;line-height:21px;letter-spacing:-0.05px;">Yes</span>
<span style="left:1981.4px;top:374px;font-size:18.5px;line-height:21px;letter-spacing:-0.05px;">Fixed</span>
<span style="left:2177.4px;top:374px;font-size:18.5px;line-height:21px;letter-spacing:-0.05px;">None</span>
<span style="left:83.69px;top:413px;font-size:18.5px;line-height:21px;letter-spacing:0.02px;">Ingredient</span>
<a style="left:259.42px;top:413px;font-size:18.5px;line-height:21px;letter-spacing:-0.28px;transform:scaleX(0.9745);color:#1b5f7f;">Water New</a>
<span style="left:699.39px;top:413px;font-size:18.5px;line-height:21px;letter-spacing:-0.05px;">60</span>
<span style="left:905.68px;top:413px;font-size:18.5px;line-height:21px;letter-spacing:-0.05px;">5</span>
<span style="left:937.4px;top:413px;font-size:18.5px;line-height:21px;letter-spacing:-0.05px;">Each</span>
<span style="left:1232.81px;top:413px;font-size:18.5px;line-height:21px;letter-spacing:-0.05px;">1</span>
<span style="left:1362.68px;top:413px;font-size:18.5px;line-height:21px;letter-spacing:-0.05px;">5</span>
<span style="left:1394.4px;top:413px;font-size:18.5px;line-height:21px;letter-spacing:-0.05px;">Design</span>
<span style="left:1786.4px;top:413px;font-size:18.5px;line-height:21px;letter-spacing:-0.05px;">Yes</span>
<span style="left:1981.4px;top:413px;font-size:18.5px;line-height:21px;letter-spacing:-0.05px;">Variable</span>
<span style="left:2177.4px;top:413px;font-size:18.5px;line-height:21px;letter-spacing:-0.05px;">None</span>
<span style="left:83.69px;top:453px;font-size:18.5px;line-height:21px;letter-spacing:0.02px;">Ingredient</span>
<a style="left:259.42px;top:453px;font-size:18.5px;line-height:21px;letter-spacing:-0.28px;transform:scaleX(0.9745);color:#1b5f7f;">Water New</a>
<span style="left:699.39px;top:453px;font-size:18.5px;line-height:21px;letter-spacing:-0.05px;">70</span>
<span style="left:905.81px;top:453px;font-size:18.5px;line-height:21px;letter-spacing:-0.05px;">1</span>
<span style="left:937.4px;top:453px;font-size:18.5px;line-height:21px;letter-spacing:-0.05px;">Each</span>
<span style="left:1232.81px;top:453px;font-size:18.5px;line-height:21px;letter-spacing:-0.05px;">1</span>
<span style="left:1362.81px;top:453px;font-size:18.5px;line-height:21px;letter-spacing:-0.05px;">1</span>
<span style="left:1394.4px;top:453px;font-size:18.5px;line-height:21px;letter-spacing:-0.05px;">Design</span>
<span style="left:1786.4px;top:453px;font-size:18.5px;line-height:21px;letter-spacing:-0.05px;">Yes</span>
<span style="left:1981.4px;top:453px;font-size:18.5px;line-height:21px;letter-spacing:-0.05px;">Variable</span>
<span style="left:2177.4px;top:453px;font-size:18.5px;line-height:21px;letter-spacing:-0.05px;">None</span>
</div>
<footer id="dock" style="left:0;top:1480px;width:2500px;height:83px;background:#243a42">
<div style="left:0px;top:0px;width:2500px;height:1.8px;background:#0b1114"></div>
<div style="left:530px;top:2px;width:1px;height:81px;background:#3c5159"></div>
<div style="left:595.7px;top:0px;width:185.3px;height:4.4px;background:#fbf9f8;border-radius:0 0 4px 4px"></div>
<span style="left:102.18px;top:30px;font-size:22.2px;line-height:25px;letter-spacing:-0.07px;-webkit-text-stroke:0.84px currentColor;color:#c9d3d6;">Product Management</span>
<span style="left:398.23px;top:30px;font-size:22.2px;line-height:25px;letter-spacing:-0.33px;-webkit-text-stroke:0.84px currentColor;transform:scaleX(0.9668);color:#c9d3d6;">Search</span>
<span style="left:635.6px;top:30px;font-size:22.2px;line-height:25px;letter-spacing:0.19px;-webkit-text-stroke:0.84px currentColor;color:#fff;">Tofu (000)</span>
<div style="left:2442.6px;top:25.7px;width:58px;height:58px;background:#c83524"></div>
<svg style="left:0;top:0" width="2500" height="83" viewBox="0 1480 2500 83" aria-hidden="true"><path class="s" stroke="#cdd7da" stroke-width="2.3" d="M78.9 1512.2 L88.9 1518.9 V1531.8 H68.9 V1518.9 Z"/><g class="s" stroke="#cdd7da" stroke-width="2.3"><circle cx="372.7" cy="1519.7" r="7.7"/><path d="M378.2 1525.3 L384.9 1532"/></g><path class="s" stroke="#fff" stroke-width="2.1" d="M755 1514.9 L769.2 1529.1 M769.2 1514.9 L755 1529.1"/><path fill="#fff" d="M2458.6 1520.2 H2484.3 a3.2 3.2 0 0 1 3.2 3.2 V1538.2 a3.2 3.2 0 0 1 -3.2 3.2 H2466.4 L2458.9 1548.6 a1.5 1.5 0 0 1 -2.6 -1.1 V1523.4 a3.2 3.2 0 0 1 2.3 -3.2 Z"/><circle cx="2462.2" cy="1531.8" r="2.6" fill="#c83524"/><circle cx="2471.4" cy="1531.8" r="2.6" fill="#c83524"/><circle cx="2480.6" cy="1531.8" r="2.6" fill="#c83524"/></svg>
<svg style="left:600.4px;top:31px" width="21.8" height="20.8" viewBox="245 200 1235 1135" preserveAspectRatio="none" aria-hidden="true"><path fill="#e9eef0" fill-rule="evenodd" d="M860 200 L1205 385 L1205 640 L1480 790 L1480 1150 L1140 1335 L860 1185 L590 1335 L245 1150 L245 790 L525 640 L525 385 Z M860 340 L990 410 L860 480 L735 410 Z M650 515 L795 590 L795 715 L650 640 Z M1070 515 L925 590 L925 715 L1070 640 Z M590 770 L710 835 L590 905 L465 835 Z M380 945 L520 1020 L520 1145 L380 1070 Z M795 945 L650 1020 L650 1150 L795 1075 Z M1135 770 L1255 835 L1135 905 L1015 835 Z M930 945 L1065 1020 L1065 1145 L930 1075 Z M1350 945 L1210 1020 L1210 1145 L1350 1070 Z"/></svg>
</footer>
<div id="edge" style="left:0;top:64px;width:2500px;height:1px;background:#1a1817">
</div>
</body>
</html>
